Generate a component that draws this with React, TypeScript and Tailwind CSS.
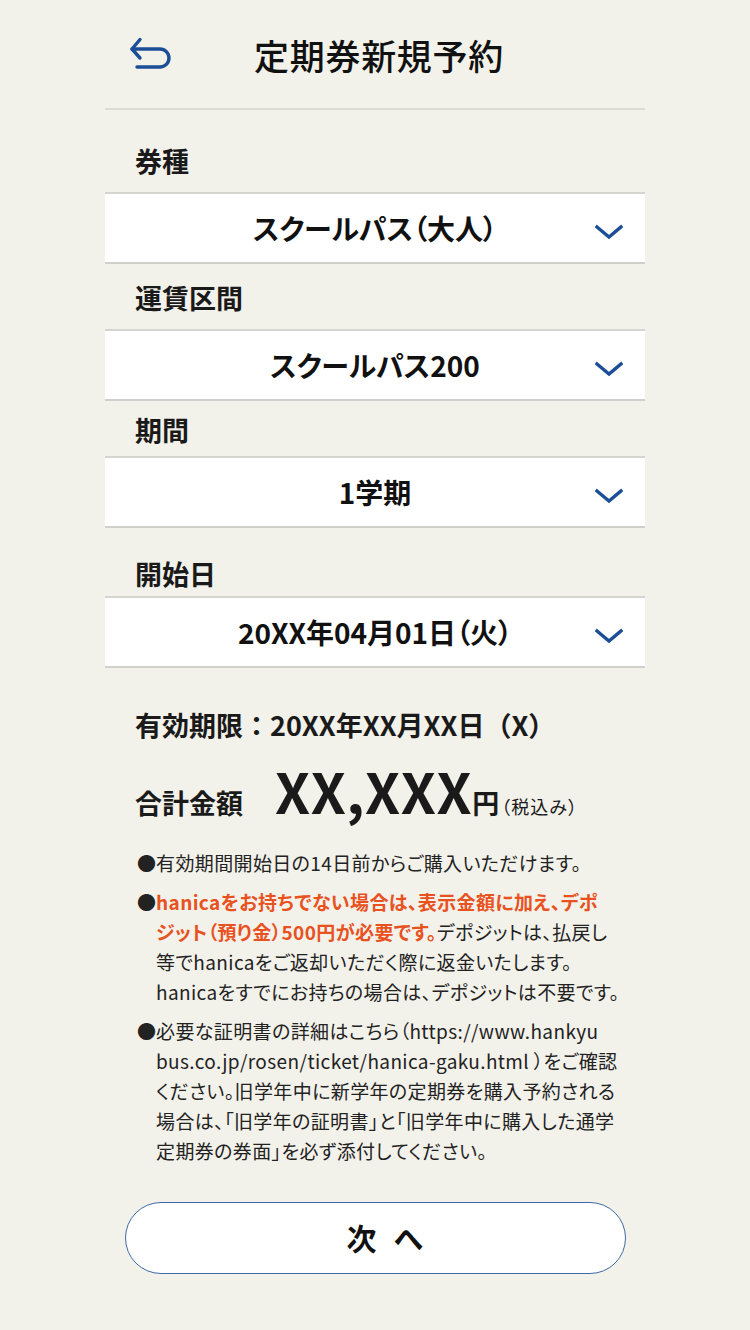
import React, { type JSX } from "react";

const font = { fontFamily: '"Noto Sans CJK JP", "Noto Sans", sans-serif' };

function Chevron(): JSX.Element {
  return (
    <svg width="28" height="16" viewBox="0 0 28 16" fill="none" className="absolute right-[22px] top-[38px] -translate-y-1/2">
      <path d="M2 3l12 10L26 3" stroke="#1b4e96" strokeWidth="3.4" strokeLinecap="square" strokeLinejoin="miter" />
    </svg>
  );
}

function SelectBox({ value }: { value: string }): JSX.Element {
  return (
    <div className="relative flex h-[72px] items-center justify-center border-t-2 border-b-2 border-t-[#d4d4d0] border-b-[#cfcfcb] bg-white">
      <span className="text-[28px] font-bold text-[#111] [font-feature-settings:'palt']">{value}</span>
      <Chevron />
    </div>
  );
}

function Bullet(): JSX.Element {
  return <span className="w-[19px] shrink-0 text-[19px] leading-[30px]">●</span>;
}

export default function App(): JSX.Element {
  return (
    <div className="min-h-screen bg-[#f2f1ea] text-[#1a1a1a]" style={font}>
      <div className="mx-auto w-[540px]">
        {/* header */}
        <div className="relative flex h-[110px] items-center justify-center border-b-2 border-[#dcdbd4]">
          <button className="absolute left-[20px] top-[30px] text-[#1b4e96]">
            <svg width="50" height="45" viewBox="0 0 50 45" fill="none" stroke="currentColor" strokeWidth="3.4" strokeLinecap="round" strokeLinejoin="round">
              <path d="M15 9.5 7 19l8 9" />
              <path d="M7 19h28a9 9 0 0 1 0 18H12" />
            </svg>
          </button>
          <h1 className="pt-[2px] pl-[8px] text-[35px] font-medium tracking-[0.02em] text-[#111]">定期券新規予約</h1>
        </div>

        <div className="px-[30px] pt-[35px] pb-[15px] text-[27px] font-bold leading-[32px]">券種</div>
        <SelectBox value="スクールパス（大人）" />

        <div className="px-[30px] pt-[18px] pb-[15px] text-[27px] font-bold leading-[32px]">運賃区間</div>
        <SelectBox value="スクールパス200" />

        <div className="px-[30px] pt-[13px] pb-[10px] text-[27px] font-bold leading-[32px]">期間</div>
        <SelectBox value="1学期" />

        <div className="px-[30px] pt-[30px] pb-[6px] text-[27px] font-bold leading-[32px]">開始日</div>
        <SelectBox value="20XX年04月01日（火）" />

        <div className="px-[30px] pt-[39px] text-[27px] font-bold leading-[36px]">有効期限：20XX年XX月XX日（X）</div>

        <div className="mt-[17px] flex items-baseline px-[30px]">
          <span className="text-[27px] font-bold">合計金額</span>
          <span className="ml-[32px] text-[56px] font-bold leading-[60px] tracking-[0.01em]">XX,XXX</span>
          <span className="text-[27px] font-bold">円</span>
          <span className="ml-[2px] text-[18px] tracking-[0.06em] [font-feature-settings:'palt']">（税込み）</span>
        </div>

        <div className="mt-[24px] flex flex-col gap-[9px] pl-[32px] pr-[4px] text-[19px] leading-[30px] tracking-[0.02em] text-[#222] [font-feature-settings:'palt']">
          <div className="flex">
            <Bullet />
            <p className="whitespace-nowrap">有効期間開始日の14日前からご購入いただけます。</p>
          </div>
          <div className="flex">
            <Bullet />
            <p className="whitespace-nowrap">
              <span className="font-bold text-[#e8521f]">
                hanicaをお持ちでない場合は、表示金額に加え、デポ
                <br />
                ジット（預り金）500円が必要です。
              </span>
              デポジットは、払戻し
              <br />
              等でhanicaをご返却いただく際に返金いたします。
              <br />
              hanicaをすでにお持ちの場合は、デポジットは不要です。
            </p>
          </div>
          <div className="flex">
            <Bullet />
            <p className="whitespace-nowrap">
              必要な証明書の詳細はこちら（https://www.hankyu
              <br />
              bus.co.jp/rosen/ticket/hanica-gaku.html ）をご確認
              <br />
              ください。旧学年中に新学年の定期券を購入予約される
              <br />
              場合は、「旧学年の証明書」と「旧学年中に購入した通学
              <br />
              定期券の券面」を必ず添付してください。
            </p>
          </div>
        </div>

        <div className="pt-[36px] pb-[58px]">
          <button className="mx-auto flex h-[72px] w-[501px] items-center justify-center gap-[17px] rounded-full border border-[#3d6aa6] bg-white pl-[20px] text-[30px] font-bold text-[#111]">
            <span>次</span>
            <span>へ</span>
          </button>
        </div>
      </div>
    </div>
  );
}
